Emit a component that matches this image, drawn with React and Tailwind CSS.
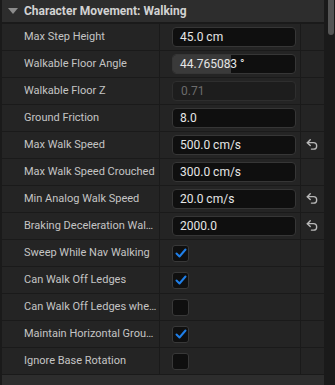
import React from 'react';

const rows = [
  { label: 'Max Step Height', type: 'text', value: '45.0 cm' },
  { label: 'Walkable Floor Angle', type: 'slider', value: '44.765083 °' },
  { label: 'Walkable Floor Z', type: 'disabled', value: '0.71' },
  { label: 'Ground Friction', type: 'text', value: '8.0' },
  { label: 'Max Walk Speed', type: 'text', value: '500.0 cm/s', reset: true },
  { label: 'Max Walk Speed Crouched', type: 'text', value: '300.0 cm/s' },
  { label: 'Min Analog Walk Speed', type: 'text', value: '20.0 cm/s', reset: true },
  { label: 'Braking Deceleration Walking', type: 'text', value: '2000.0', reset: true },
  { label: 'Sweep While Nav Walking', type: 'check', value: true },
  { label: 'Can Walk Off Ledges', type: 'check', value: true },
  { label: 'Can Walk Off Ledges when Crouching', type: 'check', value: false },
  { label: 'Maintain Horizontal Ground Velocity', type: 'check', value: true },
  { label: 'Ignore Base Rotation', type: 'check', value: false },
];

const ResetIcon = () => (
  <svg width="14" height="14" viewBox="0 0 24 24" fill="none" stroke="#b8b8b8" strokeWidth="2.4" strokeLinecap="round" strokeLinejoin="round">
    <path d="M9 13 4 8l5-5" />
    <path d="M4 8h10.5a5.5 5.5 0 0 1 0 11H11" />
  </svg>
);

const Value = ({ row }) => {
  if (row.type === 'check') {
    return (
      <div className="w-[17px] h-[17px] rounded-[3px] bg-[#0f0f0f] border border-[#383838] flex items-center justify-center">
        {row.value && (
          <svg width="12" height="10" viewBox="0 0 12 10" fill="none" stroke="#1f7fe8" strokeWidth="2" strokeLinecap="round" strokeLinejoin="round">
            <path d="M1.5 5.5 4.5 8.5 10.5 1.5" />
          </svg>
        )}
      </div>
    );
  }
  if (row.type === 'disabled') {
    return (
      <div className="w-[124px] h-[20px] rounded-[4px] bg-[#1d1d1d] border border-[#2e2e2e] flex items-center px-[8px] text-[12px] text-[#6c6c6c]">
        {row.value}
      </div>
    );
  }
  return (
    <div className="relative w-[124px] h-[20px] rounded-[4px] bg-[#0f0f0f] border border-[#363636] flex items-center overflow-hidden">
      {row.type === 'slider' && <div className="absolute left-0 top-0 bottom-0 w-[58px] bg-[#3a3a3a]" />}
      <span className="relative px-[7px] text-[12px] text-[#e6e6e6]">{row.value}</span>
    </div>
  );
};

export default function App() {
  return (
    <div className="w-[335px] h-[385px] bg-[#1a1a1a] flex overflow-hidden" style={{ fontFamily: 'Roboto, "Liberation Sans", sans-serif' }}>
      <div className="w-[324px] pl-[2px] flex flex-col">
        {/* En-tête */}
        <div className="h-[23px] shrink-0 bg-[#2d2d2d] flex items-center border-b border-[#1a1a1a]">
          <svg width="10" height="7" viewBox="0 0 10 7" className="ml-[6px] mr-[6px]">
            <path d="M0 0h10L5 6z" fill="#8c8c8c" />
          </svg>
          <span className="font-bold text-[12px] text-[#d2d2d2]">Character Movement: Walking</span>
        </div>

        {rows.map((row) => (
          <div key={row.label} className="h-[27px] shrink-0 flex bg-[#242424] border-t border-[#1a1a1a]">
            <div className="w-[158px] shrink-0 pl-[22px] pr-[1px] flex items-center text-[11px] text-[#c4c4c4] border-r border-[#1a1a1a]">
              <span className="truncate">{row.label}</span>
            </div>
            <div className="w-[141px] shrink-0 pl-[12px] flex items-center border-r border-[#1a1a1a]">
              <Value row={row} />
            </div>
            <div className="flex-1 flex items-center justify-center pr-[2px]">
              {row.reset && <ResetIcon />}
            </div>
          </div>
        ))}

        {/* Section suivante */}
        <div className="h-[23px] shrink-0 bg-[#2d2d2d] flex items-center border-t border-[#1a1a1a]">
          <svg width="7" height="10" viewBox="0 0 7 10" className="ml-[8px] mr-[8px] mt-[10px]">
            <path d="M0 0v10l6-5z" fill="#8c8c8c" />
          </svg>
          <span className="font-bold text-[12px] text-[#d2d2d2] mt-[14px]">Advanced</span>
        </div>
      </div>

      {/* Barre de défilement */}
      <div className="flex-1 relative">
        <div className="absolute left-[4px] top-0 w-[6px] h-[35px] rounded-b-[3px] bg-[#555555]" />
      </div>
    </div>
  );
}
